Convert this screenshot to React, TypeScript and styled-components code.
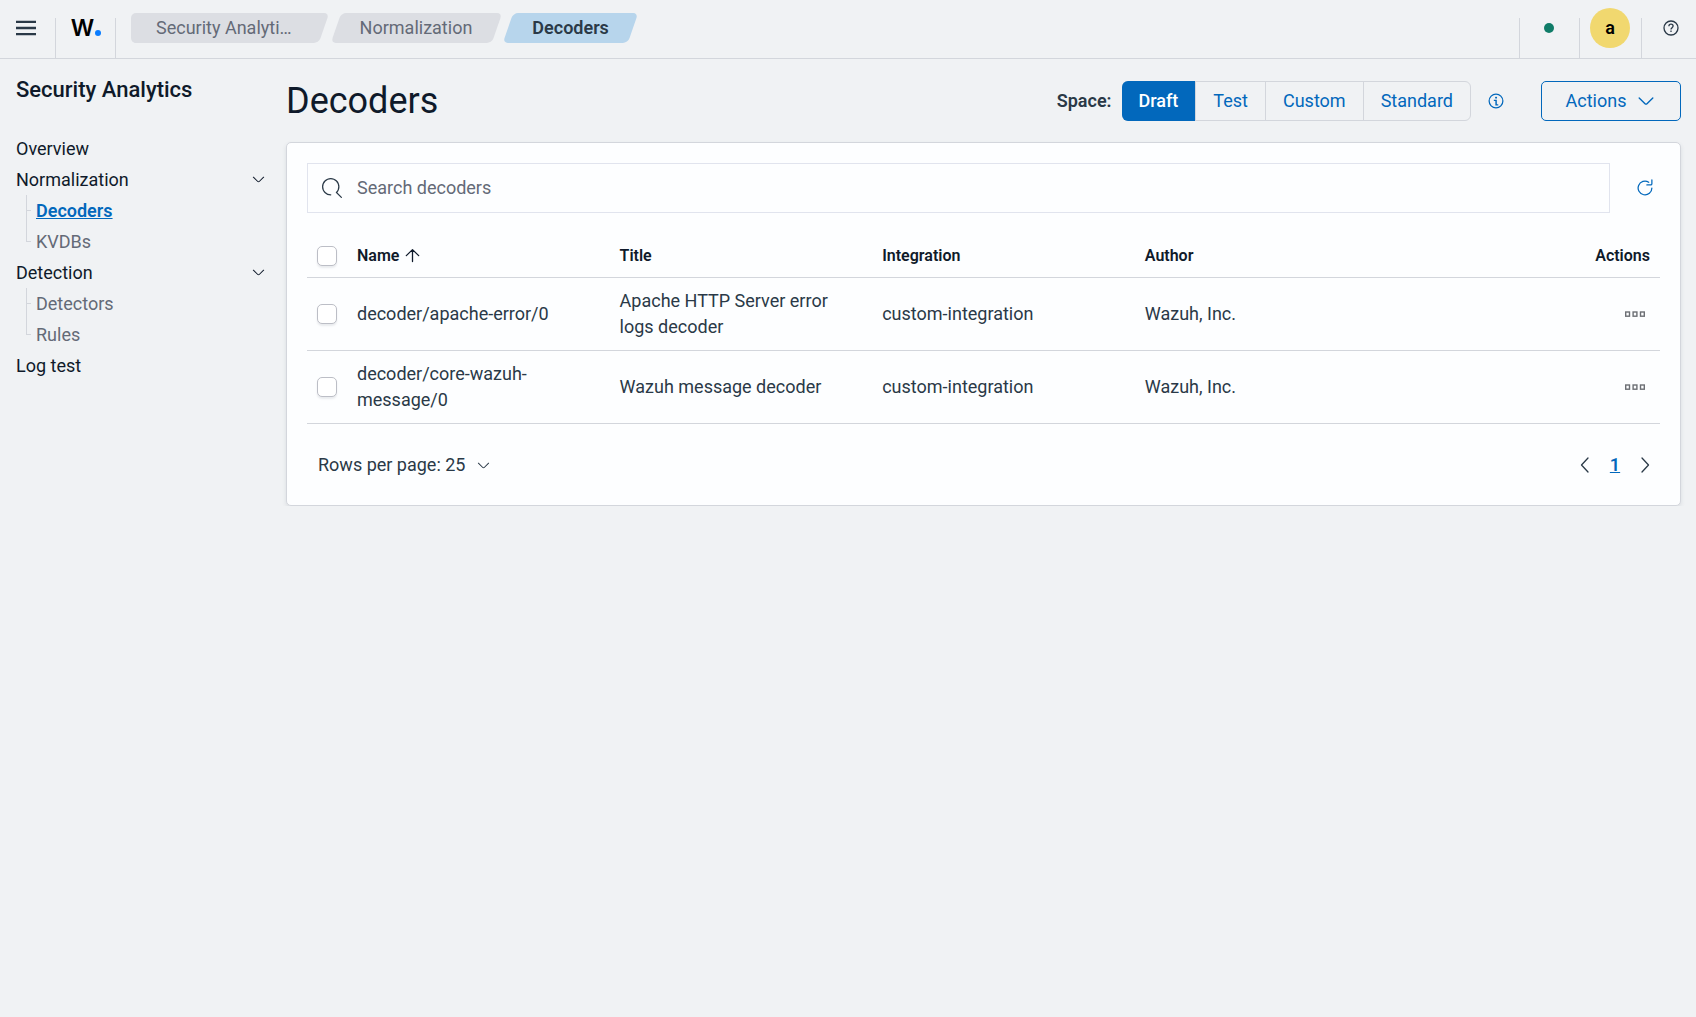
import React, { useState } from "react";
import styled, { createGlobalStyle, css } from "styled-components";

const font = `Roboto, "Liberation Sans", sans-serif`;

const color = {
  page: "#f0f2f4",
  panel: "#fdfeff",
  line: "#d3d6dc",
  inputLine: "#e1e4ee",
  title: "#0f1a2a",
  text: "#2a3947",
  subdued: "#646a77",
  primary: "#0268bc",
};

const GlobalStyle = createGlobalStyle`
  *, *::before, *::after { box-sizing: border-box; }
  body {
    margin: 0;
    background: ${color.page};
    color: ${color.text};
    font-family: ${font};
    font-size: 18px;
    line-height: 26px;
  }
  button, input { font: inherit; color: inherit; }
  button { background: none; border: 0; padding: 0; cursor: pointer; }
  a { color: inherit; text-decoration: none; }
  svg { display: block; flex: none; }
`;

/* ---------- icons ---------- */

type IconProps = { size?: number };

const Glyph = ({ d, size = 20 }: IconProps & { d: string }) => (
  <svg width={size} height={size} viewBox="0 0 16 16" fill="currentColor" aria-hidden="true">
    <path d={d} />
  </svg>
);

const ChevronDown = ({ size = 15 }: IconProps) => (
  <Glyph
    size={size}
    d="M13.069 5.157L8.384 9.768a.546.546 0 01-.768 0L2.93 5.158a.552.552 0 00-.771 0 .53.53 0 000 .759l4.684 4.61c.641.631 1.672.63 2.312 0l4.684-4.61a.53.53 0 000-.76.552.552 0 00-.771 0z"
  />
);

const SearchIcon = () => (
  <Glyph d="M11.271 11.978l3.872 3.873a.502.502 0 00.708 0 .502.502 0 000-.708l-3.565-3.564c2.38-2.747 2.267-6.923-.342-9.532-2.73-2.73-7.17-2.73-9.898 0-2.728 2.729-2.728 7.17 0 9.9a6.955 6.955 0 004.949 2.05.5.5 0 000-1 5.96 5.96 0 01-4.242-1.757 6.01 6.01 0 010-8.486 6.004 6.004 0 018.484 0 6.01 6.01 0 010 8.486.5.5 0 00-.034.738z" />
);

const RefreshIcon = () => (
  <Glyph d="M11.228 2.942a.5.5 0 11-.538.842A5 5 0 1013 8a.5.5 0 111 0 6 6 0 11-2.772-5.058zM14 1.5v3A1.5 1.5 0 0112.5 6h-3a.5.5 0 010-1h3a.5.5 0 00.5-.5v-3a.5.5 0 111 0z" />
);

const InfoIcon = () => (
  <Glyph d="M7.5 11.508L7.468 8H6.25V7h2.401l.03 3.508H9.8v1H7.5zm-.25-6.202a.83.83 0 01.207-.577c.137-.153.334-.229.59-.229.256 0 .454.076.593.23.14.152.21.345.21.576 0 .228-.07.417-.21.568-.14.15-.337.226-.593.226-.256 0-.453-.075-.59-.226a.81.81 0 01-.207-.568zM8 13A5 5 0 108 3a5 5 0 000 10zm0 1A6 6 0 118 2a6 6 0 010 12z" />
);

const HelpIcon = () => (
  <svg width="20" height="20" viewBox="0 0 20 20" fill="none" stroke="currentColor" strokeWidth="1.3" aria-hidden="true">
    <circle cx="10" cy="10" r="7" />
    <path d="M7.9 8.3c0-1.3 .9-2.1 2.1-2.1s2.1 .8 2.1 1.9c0 1.5-2.1 1.6-2.1 3.3" />
    <path d="M10 12.6v1.4" />
  </svg>
);

const MenuIcon = () => (
  <svg width="20" height="20" viewBox="0 0 20 20" stroke="currentColor" strokeWidth="2.3" aria-hidden="true">
    <path d="M0 3.8h20M0 10h20M0 16.2h20" />
  </svg>
);

const SortUpIcon = () => (
  <svg width="15" height="15" viewBox="0 0 15 15" fill="none" stroke="currentColor" strokeWidth="1.3" strokeLinecap="round" strokeLinejoin="round" aria-hidden="true">
    <path d="M7.5 13.5V1.6M1.3 7.6l6.2-6 6.2 6" />
  </svg>
);

const MoreIcon = () => (
  <svg width="20" height="20" viewBox="0 0 20 20" fill="none" stroke="currentColor" strokeWidth="1.4" aria-hidden="true">
    <rect x="0.7" y="8" width="3.8" height="4.2" />
    <rect x="8.1" y="8" width="3.8" height="4.2" />
    <rect x="15.5" y="8" width="3.8" height="4.2" />
  </svg>
);

const PageArrow = ({ d }: { d: string }) => (
  <svg width="20" height="20" viewBox="0 0 20 20" fill="none" stroke="currentColor" strokeWidth="1.3" strokeLinecap="round" strokeLinejoin="round" aria-hidden="true">
    <path d={d} />
  </svg>
);

/* ---------- header ---------- */

const Header = styled.header`
  display: flex;
  align-items: flex-start;
  height: 59px;
  border-bottom: 1px solid ${color.line};
`;

const HeaderCell = styled.div<{ $width: number; $divider: "left" | "right" }>`
  display: flex;
  align-items: center;
  justify-content: center;
  flex: none;
  width: ${(p) => p.$width}px;
  height: 58px;
  padding-bottom: 2px;
  background: linear-gradient(${color.line}, ${color.line}) ${(p) => p.$divider} bottom / 1px 40px no-repeat;
`;

const MenuCell = styled(HeaderCell)`
  padding-right: 4px;
`;

const HelpCell = styled(HeaderCell)`
  padding-left: 4px;
`;

const Logo = styled.a`
  display: flex;
  align-items: baseline;
  gap: 1px;
  font-family: Inter, sans-serif;
  font-size: 23px;
  font-weight: 600;
  color: #000;
`;

const LogoDot = styled.span`
  width: 6px;
  height: 6px;
  border-radius: 50%;
  background: #0a7dff;
`;

const Crumbs = styled.nav`
  display: flex;
  gap: 12px;
  margin: 13px auto 0 20px;
`;

const Crumb = styled.a<{ $current?: boolean; $first?: boolean }>`
  position: relative;
  display: flex;
  align-items: center;
  height: 30px;
  padding: ${(p) => (p.$first ? "0 32px 0 20px" : "0 24px")};
  z-index: 0;
  color: ${(p) => (p.$current ? color.text : color.subdued)};
  font-weight: ${(p) => (p.$current ? 600 : 400)};

  &::before,
  &::after {
    content: "";
    position: absolute;
    inset: 0;
    z-index: -1;
    border-radius: 5px;
    background: ${(p) => (p.$current ? "#b7d5ec" : "#dcdee3")};
  }
  &::before {
    transform: skewX(-19deg);
  }
  &::after {
    display: ${(p) => (p.$first ? "block" : "none")};
    left: -5px;
    right: 50%;
  }
`;

const StatusDot = styled.span`
  width: 10px;
  height: 10px;
  border-radius: 50%;
  background: #107c68;
`;

const Avatar = styled.button`
  width: 40px;
  height: 40px;
  border-radius: 50%;
  background: #f1d86f;
  color: #000;
  font-weight: 600;
`;

/* ---------- sidebar ---------- */

const Body = styled.div`
  display: flex;
`;

const Sidebar = styled.aside`
  width: 286px;
  flex: none;
  padding: 18px 20px 0 16px;
`;

const SidebarTitle = styled.h2`
  margin: 0 0 30px;
  font-size: 22px;
  line-height: 26px;
  font-weight: 500;
  color: ${color.title};
`;

const NavList = styled.ul`
  margin: 0;
  padding: 0;
  list-style: none;
`;

const NavLink = styled.a`
  display: flex;
  align-items: center;
  height: 31px;
  color: ${color.title};
`;

const NavGroup = styled.button`
  display: flex;
  align-items: center;
  justify-content: space-between;
  width: 100%;
  height: 31px;
  color: ${color.title};
`;

const SubItem = styled.li`
  position: relative;
  margin-left: 10px;
  padding-left: 10px;

  &::before {
    content: "";
    position: absolute;
    left: 0;
    top: 0;
    width: 5px;
    height: 16px;
    border-left: 1px solid ${color.line};
    border-bottom: 1px solid ${color.line};
  }
  &:not(:last-child)::after {
    content: "";
    position: absolute;
    left: 0;
    top: 0;
    height: 100%;
    border-left: 1px solid ${color.line};
  }
`;

const SubLink = styled(NavLink)<{ $active?: boolean }>`
  color: ${(p) => (p.$active ? color.primary : color.subdued)};
  font-weight: ${(p) => (p.$active ? 600 : 400)};
  text-decoration: ${(p) => (p.$active ? "underline" : "none")};
`;

/* ---------- main ---------- */

const Main = styled.main`
  flex: 1;
  min-width: 0;
  padding: 22px 15px 0 0;
`;

const TitleRow = styled.div`
  display: flex;
  align-items: center;
  height: 40px;
  margin-bottom: 21px;
`;

const Title = styled.h1`
  margin: 0 auto 0 0;
  font-size: 36px;
  line-height: 40px;
  font-weight: 400;
  color: ${color.title};
`;

const SpaceLabel = styled.span`
  margin-right: 10px;
  font-weight: 600;
`;

const Segments = styled.div`
  display: flex;
  height: 40px;
  border: 1px solid ${color.line};
  border-radius: 6px;
`;

const Segment = styled.button<{ $on: boolean }>`
  padding: 0 17px;
  color: ${color.primary};

  & + & {
    border-left: 1px solid ${color.line};
  }
  ${(p) =>
    p.$on &&
    css`
      margin: -1px 0 -1px -1px;
      border-radius: 6px 0 0 6px;
      background: ${color.primary};
      color: #fff;
      font-weight: 500;
    `}
`;

const IconButton = styled.button`
  display: flex;
  align-items: center;
  justify-content: center;
  width: 30px;
  height: 30px;
`;

const InfoButton = styled(IconButton)`
  margin: 0 30px 0 10px;
  color: ${color.primary};
`;

const ActionsButton = styled.button`
  display: flex;
  align-items: center;
  justify-content: center;
  gap: 10px;
  min-width: 140px;
  height: 40px;
  border: 1px solid ${color.primary};
  border-radius: 5px;
  color: ${color.primary};
`;

const Panel = styled.section`
  padding: 20px;
  border: 1px solid ${color.line};
  border-radius: 5px;
  background: ${color.panel};
  box-shadow: 0 2px 4px rgba(60, 70, 90, 0.12);
`;

const SearchRow = styled.div`
  display: flex;
  align-items: center;
  margin-bottom: 21px;
`;

const SearchBox = styled.label`
  display: flex;
  align-items: center;
  gap: 15px;
  flex: 1;
  height: 50px;
  padding: 0 14px;
  border: 1px solid ${color.inputLine};
`;

const SearchInput = styled.input`
  flex: 1;
  border: 0;
  padding: 0;
  outline: 0;
  background: none;

  &::placeholder {
    color: ${color.subdued};
    opacity: 1;
  }
`;

const RefreshButton = styled(IconButton)`
  margin: 0 0 0 20px;
  color: ${color.primary};
`;

const Table = styled.table`
  width: 100%;
  table-layout: fixed;
  border-collapse: collapse;
  text-align: left;
`;

const CheckCol = styled.col`
  width: 40px;
`;

const HeadCell = styled.th<{ $right?: boolean }>`
  padding: 10px;
  border-bottom: 1px solid ${color.line};
  font-size: 16px;
  line-height: 23px;
  font-weight: 600;
  color: ${color.title};
  text-align: ${(p) => (p.$right ? "right" : "left")};
`;

const SortButton = styled.button`
  display: flex;
  align-items: center;
  gap: 6px;
`;

const Cell = styled.td`
  height: 73px;
  padding: 10px;
  border-bottom: 1px solid ${color.line};
`;

const Checkbox = styled.input`
  display: block;
  appearance: none;
  width: 20px;
  height: 20px;
  margin: 0;
  border: 1px solid #bcbec6;
  border-radius: 5px;
  background: #fff;
  box-shadow: 0 2px 2px rgba(60, 70, 90, 0.1);

  &:checked {
    background: ${color.primary};
  }
`;

const MoreButton = styled(IconButton)`
  margin-left: auto;
  color: #6c6f74;
`;

const Footer = styled.div`
  display: flex;
  align-items: center;
  justify-content: space-between;
  padding: 26px 0 5px 11px;
`;

const RowsButton = styled.button`
  display: flex;
  align-items: center;
  gap: 11px;
`;

const Pager = styled.nav`
  display: flex;
`;

const PageNumber = styled(IconButton)`
  color: ${color.primary};
  font-weight: 600;
  text-decoration: underline;
`;

/* ---------- data ---------- */

const spaces = ["Draft", "Test", "Custom", "Standard"];

const decoders = [
  {
    name: "decoder/apache-error/0",
    title: "Apache HTTP Server error logs decoder",
    integration: "custom-integration",
    author: "Wazuh, Inc.",
  },
  {
    name: "decoder/core-wazuh-message/0",
    title: "Wazuh message decoder",
    integration: "custom-integration",
    author: "Wazuh, Inc.",
  },
];

const groups = [
  { label: "Normalization", items: ["Decoders", "KVDBs"] },
  { label: "Detection", items: ["Detectors", "Rules"] },
];

export default function App() {
  const [space, setSpace] = useState("Draft");

  return (
    <>
      <GlobalStyle />
      <Header>
        <MenuCell $width={56} $divider="right">
          <IconButton aria-label="Menu">
            <MenuIcon />
          </IconButton>
        </MenuCell>
        <HeaderCell $width={60} $divider="right">
          <Logo href="#">
            W<LogoDot />
          </Logo>
        </HeaderCell>
        <Crumbs aria-label="Breadcrumb">
          <Crumb href="#" $first>Security Analyti…</Crumb>
          <Crumb href="#">Normalization</Crumb>
          <Crumb href="#" $current aria-current="page">Decoders</Crumb>
        </Crumbs>
        <HeaderCell $width={60} $divider="left">
          <StatusDot />
        </HeaderCell>
        <HeaderCell $width={62} $divider="left">
          <Avatar>a</Avatar>
        </HeaderCell>
        <HelpCell $width={55} $divider="left">
          <IconButton aria-label="Help">
            <HelpIcon />
          </IconButton>
        </HelpCell>
      </Header>

      <Body>
        <Sidebar>
          <SidebarTitle>Security Analytics</SidebarTitle>
          <NavList>
            <li><NavLink href="#">Overview</NavLink></li>
            {groups.map((group) => (
              <li key={group.label}>
                <NavGroup>
                  {group.label}
                  <ChevronDown />
                </NavGroup>
                <NavList>
                  {group.items.map((item) => (
                    <SubItem key={item}>
                      <SubLink href="#" $active={item === "Decoders"}>{item}</SubLink>
                    </SubItem>
                  ))}
                </NavList>
              </li>
            ))}
            <li><NavLink href="#">Log test</NavLink></li>
          </NavList>
        </Sidebar>

        <Main>
          <TitleRow>
            <Title>Decoders</Title>
            <SpaceLabel id="space-label">Space:</SpaceLabel>
            <Segments role="group" aria-labelledby="space-label">
              {spaces.map((name) => (
                <Segment key={name} $on={name === space} aria-pressed={name === space} onClick={() => setSpace(name)}>
                  {name}
                </Segment>
              ))}
            </Segments>
            <InfoButton aria-label="About spaces">
              <InfoIcon />
            </InfoButton>
            <ActionsButton>
              Actions
              <ChevronDown size={20} />
            </ActionsButton>
          </TitleRow>

          <Panel>
            <SearchRow>
              <SearchBox>
                <SearchIcon />
                <SearchInput type="search" placeholder="Search decoders" aria-label="Search decoders" />
              </SearchBox>
              <RefreshButton aria-label="Refresh">
                <RefreshIcon />
              </RefreshButton>
            </SearchRow>

            <Table>
              <colgroup>
                <CheckCol />
                <col />
                <col />
                <col />
                <col />
                <col />
              </colgroup>
              <thead>
                <tr>
                  <HeadCell><Checkbox type="checkbox" aria-label="Select all rows" /></HeadCell>
                  <HeadCell aria-sort="ascending">
                    <SortButton>
                      Name
                      <SortUpIcon />
                    </SortButton>
                  </HeadCell>
                  <HeadCell>Title</HeadCell>
                  <HeadCell>Integration</HeadCell>
                  <HeadCell>Author</HeadCell>
                  <HeadCell $right>Actions</HeadCell>
                </tr>
              </thead>
              <tbody>
                {decoders.map((row) => (
                  <tr key={row.name}>
                    <Cell><Checkbox type="checkbox" aria-label={`Select ${row.name}`} /></Cell>
                    <Cell>{row.name}</Cell>
                    <Cell>{row.title}</Cell>
                    <Cell>{row.integration}</Cell>
                    <Cell>{row.author}</Cell>
                    <Cell>
                      <MoreButton aria-label="Row actions">
                        <MoreIcon />
                      </MoreButton>
                    </Cell>
                  </tr>
                ))}
              </tbody>
            </Table>

            <Footer>
              <RowsButton>
                Rows per page: 25
                <ChevronDown />
              </RowsButton>
              <Pager aria-label="Pagination">
                <IconButton aria-label="Previous page"><PageArrow d="M13 3l-6.5 7 6.5 7" /></IconButton>
                <PageNumber aria-current="page">1</PageNumber>
                <IconButton aria-label="Next page"><PageArrow d="M7 3l6.5 7-6.5 7" /></IconButton>
              </Pager>
            </Footer>
          </Panel>
        </Main>
      </Body>
    </>
  );
}
